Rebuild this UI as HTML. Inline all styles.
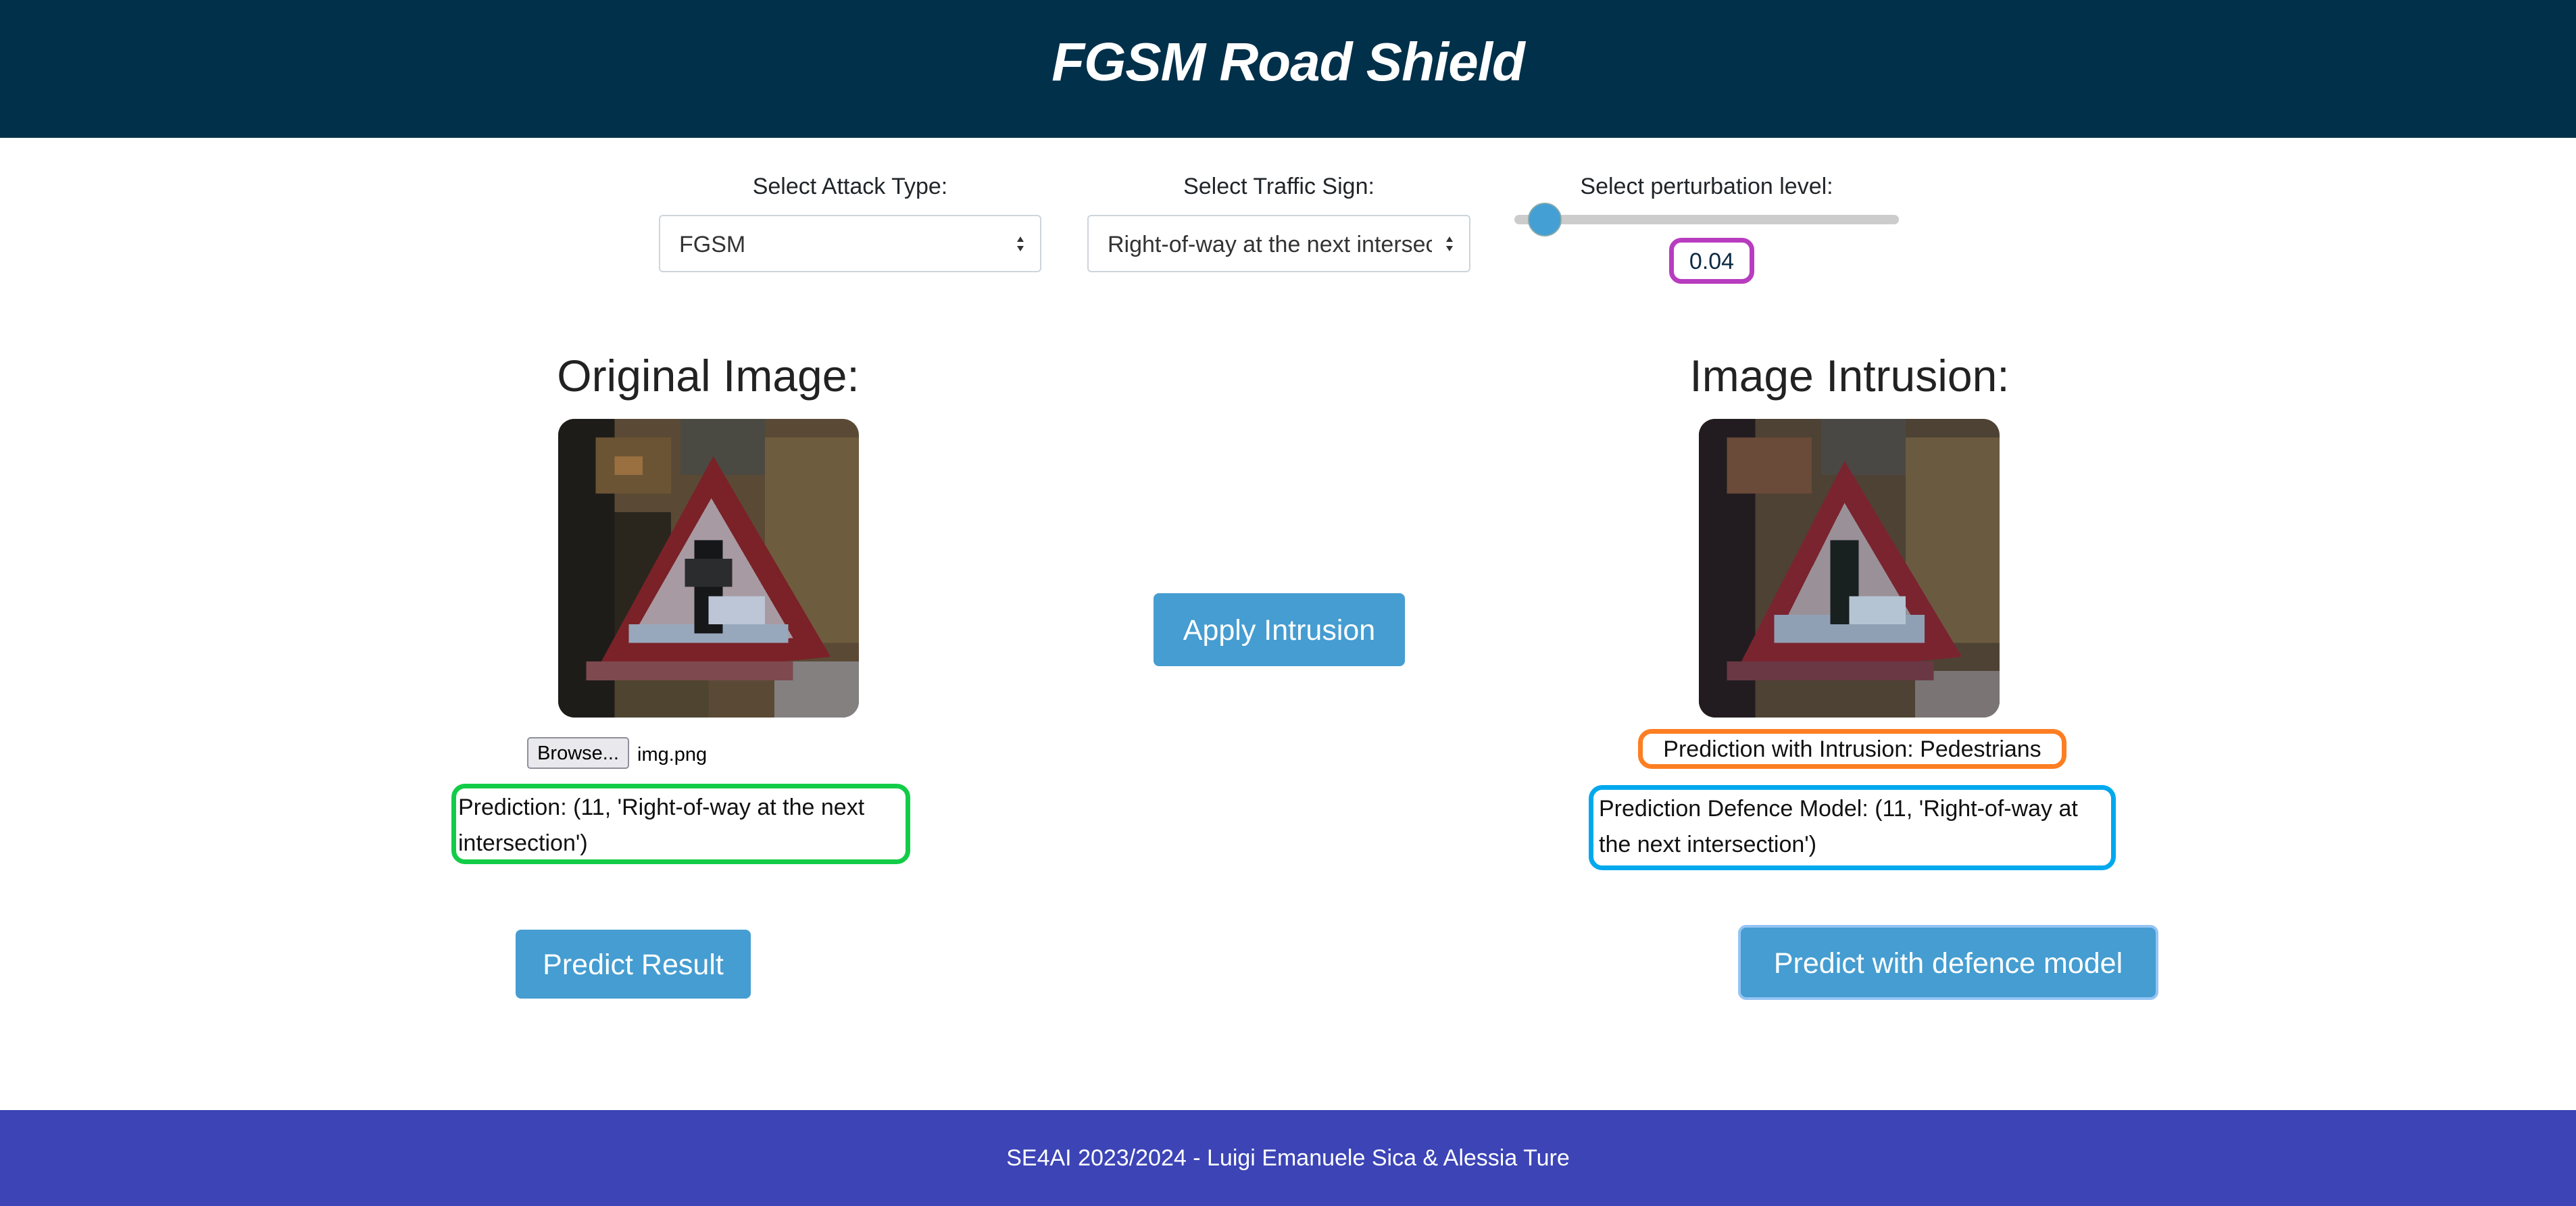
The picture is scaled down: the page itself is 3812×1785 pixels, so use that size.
<!DOCTYPE html>
<html><head><meta charset="utf-8"><style>
*{box-sizing:border-box;margin:0;padding:0}
body{width:3812px;height:1785px;position:relative;background:#fff;font-family:"Liberation Sans",sans-serif;color:#212529;overflow:hidden}
.a{position:absolute}
.hdr{left:0;top:0;width:3812px;height:204px;background:#00304a}
.title{left:0;width:3812px;top:46px;text-align:center;color:#fff;font-size:80px;font-weight:bold;font-style:italic;letter-spacing:-1px}
.lbl{font-size:34px;text-align:center}
.sel{border:2px solid #ced4da;border-radius:6px;background:#fff;font-size:34px;line-height:81px;color:#333;overflow:hidden;white-space:nowrap}
.sel span{position:absolute;left:28px;top:2px;overflow:hidden;white-space:nowrap}
.arr{position:absolute;right:22px;top:28px;width:14px;height:26px}
.h2{font-size:66px;text-align:center;color:#222}
.btn{background:#459dd1;color:#fff;border-radius:8px;text-align:center;font-size:43px}
.box{border-radius:20px;font-size:34px;line-height:53px;background:#fff}
.foot{left:0;top:1643px;width:3812px;height:142px;background:#3c44b6;color:#fff;font-size:34px;text-align:center;line-height:142px}
</style></head><body>
<div class="a hdr"></div>
<div class="a title">FGSM Road Shield</div>

<div class="a lbl" style="left:975px;width:566px;top:257px">Select Attack Type:</div>
<div class="a lbl" style="left:1609px;width:567px;top:257px">Select Traffic Sign:</div>
<div class="a lbl" style="left:2241px;width:569px;top:257px">Select perturbation level:</div>

<div class="a sel" style="left:975px;top:318px;width:566px;height:85px"><span>FGSM</span><svg class="arr" viewBox="0 0 14 26"><path d="M7 2L12 10H2Z M7 24L12 16H2Z" fill="#333"/></svg></div>
<div class="a sel" style="left:1609px;top:318px;width:567px;height:85px"><span style="width:480px">Right-of-way at the next intersection</span><svg class="arr" viewBox="0 0 14 26"><path d="M7 2L12 10H2Z M7 24L12 16H2Z" fill="#333"/></svg></div>

<div class="a" style="left:2241px;top:318px;width:569px;height:14px;background:#ccc;border-radius:7px"></div>
<div class="a" style="left:2261px;top:300px;width:50px;height:50px;border-radius:50%;background:#449fd4;border:2px solid #8aa"></div>
<div class="a" style="left:2470px;top:352px;width:126px;height:68px;border:7px solid #b83cbf;border-radius:18px;font-size:34px;text-align:center;line-height:56px;color:#0a2a44">0.04</div>

<div class="a h2" style="left:748px;width:600px;top:518px">Original Image:</div>
<div class="a h2" style="left:2437px;width:600px;top:518px">Image Intrusion:</div>

<svg class="a" style="left:826px;top:620px;border-radius:24px" width="445" height="442" viewBox="0 0 32 32" preserveAspectRatio="none" shape-rendering="crispEdges">
<rect width="32" height="32" fill="#5a4a35"/>
<rect x="0" y="0" width="6" height="32" fill="#1e1c18"/>
<rect x="6" y="10" width="6" height="16" fill="#2a261e"/>
<rect x="22" y="2" width="10" height="22" fill="#6e5c3e"/>
<rect x="4" y="2" width="8" height="6" fill="#6b5434"/>
<rect x="6" y="4" width="3" height="2" fill="#9a7040"/>
<rect x="13" y="0" width="9" height="6" fill="#4a4a42"/>
<rect x="23" y="26" width="9" height="6" fill="#848080"/>
<rect x="6" y="28" width="10" height="4" fill="#4e4430"/>
<polygon points="16.5,4 3.5,28 29,25.5" fill="#7a2228"/>
<polygon points="16.3,8.5 7.5,24 25,23.5" fill="#a89aa2"/>
<rect x="7.5" y="22" width="17" height="2" fill="#98a8bc"/>
<rect x="14.5" y="13" width="3" height="10" fill="#151719"/>
<rect x="13.5" y="15" width="5" height="3" fill="#2a2c2e"/>
<rect x="16" y="19" width="6" height="3" fill="#bcc6d6"/>
<rect x="3" y="26" width="22" height="2" fill="#7e4a50"/>
</svg>

<svg class="a" style="left:2514px;top:620px;border-radius:24px" width="445" height="442" viewBox="0 0 32 32" preserveAspectRatio="none" shape-rendering="crispEdges">
<rect width="32" height="32" fill="#4e4234"/>
<rect x="0" y="0" width="6" height="32" fill="#221c20"/>
<rect x="22" y="2" width="10" height="22" fill="#6a5a40"/>
<rect x="3" y="2" width="9" height="6" fill="#6a4a38"/>
<rect x="13" y="0" width="9" height="6" fill="#4a4844"/>
<rect x="23" y="27" width="9" height="5" fill="#7a7474"/>
<polygon points="15.5,4.5 3.5,28 28,25.5" fill="#7a2430"/>
<polygon points="15.5,9 8,24 24,23.5" fill="#9a9098"/>
<rect x="8" y="21" width="16" height="3" fill="#90a0b4"/>
<rect x="14" y="13" width="3" height="9" fill="#182020"/>
<rect x="16" y="19" width="6" height="3" fill="#b4c4d2"/>
<rect x="3" y="26" width="22" height="2" fill="#6a3844"/>
</svg>

<div class="a" style="left:780px;top:1091px;width:151px;height:47px;border:2px solid #8f8f9d;border-radius:5px;background:#e9e9ed;font-size:29px;text-align:center;line-height:45px;color:#000">Browse...</div>
<div class="a" style="left:943px;top:1095px;font-size:29px;line-height:45px;color:#000">img.png</div>

<div class="a box" style="left:668px;top:1160px;width:679px;height:119px;border:7px solid #12cc48;padding:2px 0 0 3px;color:#111">Prediction: (11, 'Right-of-way at the next intersection')</div>

<div class="a btn" style="left:1707px;top:878px;width:372px;height:108px;line-height:110px">Apply Intrusion</div>

<div class="a box" style="left:2424px;top:1079px;width:634px;height:59px;border:7px solid #fd7e22;text-align:center;line-height:47px;color:#111">Prediction with Intrusion: Pedestrians</div>
<div class="a box" style="left:2351px;top:1162px;width:780px;height:126px;border:7px solid #00a8ee;padding:2px 0 0 8px;color:#111">Prediction Defence Model: (11, 'Right-of-way at the next intersection')</div>

<div class="a btn" style="left:763px;top:1376px;width:348px;height:102px;line-height:104px">Predict Result</div>
<div class="a btn" style="left:2572px;top:1369px;width:622px;height:111px;line-height:106px;border:4px solid #94c4f4;border-radius:12px">Predict with defence model</div>

<div class="a foot">SE4AI 2023/2024 - Luigi Emanuele Sica &amp; Alessia Ture</div>
</body></html>
